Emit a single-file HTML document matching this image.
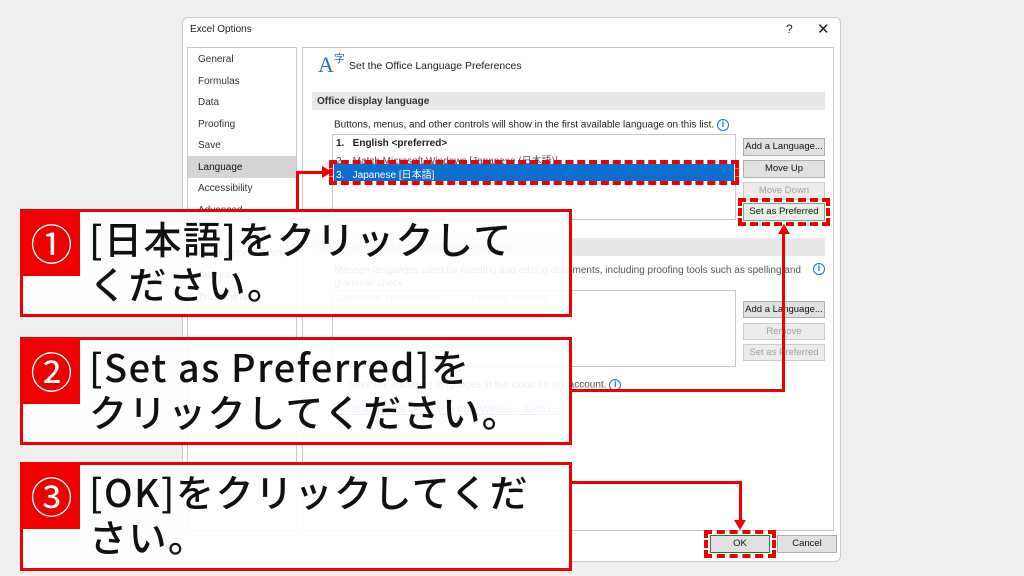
<!DOCTYPE html>
<html><head><meta charset="utf-8"><style>
*{margin:0;padding:0;box-sizing:border-box}
body{width:1024px;height:576px;background:#efefef;position:relative;overflow:hidden;font-family:"Liberation Sans","Noto Sans CJK JP",sans-serif;font-size:10px;color:#222}
.a{position:absolute;white-space:nowrap}
.dlg{left:182px;top:17px;width:659px;height:545px;background:#fff;border:1px solid #ccc;border-radius:6px}
.nav{left:187px;top:47px;width:110px;height:484px;border:1px solid #c8c8c8;background:#fff}
.nav div{position:absolute;left:10px;font-size:10px;color:#333;white-space:nowrap}
.main{left:302px;top:47px;width:532px;height:484px;border:1px solid #c8c8c8;background:#fff}
.sec{background:#e8e8e8;font-weight:bold;font-size:10px;padding:4px 5px;color:#333}
.btn{position:absolute;background:#e1e1e1;border:1px solid #adadad;font-size:9.5px;text-align:center;line-height:16px;color:#111;white-space:nowrap;overflow:hidden}
.dis{color:#a0a0a0;background:#ececec;border-color:#ccc}
.box{border:3px solid #e00;background:rgba(255,255,255,.9)}
.badge{position:absolute;left:0;top:0;width:57px;height:64px;background:#e00;color:#fff;font-size:42px;text-align:center;line-height:62px;font-family:"Noto Sans CJK JP",sans-serif}
.txt{position:absolute;left:66px;top:3px;font-size:38px;line-height:45px;color:#111;font-family:"Noto Sans CJK JP",sans-serif;font-weight:500;white-space:nowrap;letter-spacing:1.5px}
.dash{border:4px dashed #e00}
.ln{position:absolute;background:#e00}
.info{display:inline-block;width:12px;height:12px;border:1.5px solid #1a73c8;border-radius:50%;color:#1a73c8;font-size:9px;line-height:9px;text-align:center;font-weight:bold;vertical-align:middle}
</style></head><body>
<div class="a dlg"></div>
<div class="a" style="left:190px;top:24px;font-size:10px">Excel Options</div>
<div class="a" style="left:786px;top:22px;font-size:12px">?</div>
<div class="a" style="left:817px;top:20px;font-size:15px">✕</div>
<div class="a nav">
<div style="top:6px">General</div><div style="top:28px">Formulas</div><div style="top:49px">Data</div><div style="top:71px">Proofing</div><div style="top:92px">Save</div>
<div style="top:108px;left:0;width:108px;height:22px;background:#d5d5d5"></div>
<div style="top:114px;color:#111">Language</div><div style="top:135px">Accessibility</div><div style="top:157px">Advanced</div><div style="top:200px">Quick Access Toolbar</div><div style="top:222px">Add-ins</div><div style="top:244px">Trust Center</div>
</div>
<div class="a main"></div>
<div class="a" style="left:318px;top:52px;color:#2e6db4;font-size:22px;font-family:'Liberation Serif',serif">A<span style="font-size:11px;position:relative;top:-10px;font-family:'Noto Sans CJK JP'">字</span></div>
<div class="a" style="left:349px;top:60px;font-size:10.5px">Set the Office Language Preferences</div>
<div class="a sec" style="left:312px;top:92px;width:513px;height:18px">Office display language</div>
<div class="a" style="left:334px;top:119px">Buttons, menus, and other controls will show in the first available language on this list. <span class="info">i</span></div>
<div class="a" style="left:332px;top:134px;width:404px;height:86px;border:1px solid #c8c8c8"></div>
<div class="a" style="left:336px;top:138px;font-weight:bold">1.&nbsp;&nbsp;&nbsp;English &lt;preferred&gt;</div>
<div class="a" style="left:336px;top:152px;color:#555">2.&nbsp;&nbsp;&nbsp;Match Microsoft Windows [Japanese (日本語)]</div>
<div class="a" style="left:334px;top:164px;width:400px;height:17px;background:#0a6fd0;color:#fff;padding:2px 2px">3.&nbsp;&nbsp;&nbsp;Japanese [日本語]</div>
<div class="a dash" style="left:329px;top:160px;width:410px;height:25px"></div>
<div class="btn" style="left:743px;top:138px;width:82px;height:18px">Add a Language...</div>
<div class="btn" style="left:743px;top:160px;width:82px;height:18px">Move Up</div>
<div class="btn dis" style="left:743px;top:182px;width:82px;height:18px">Move Down</div>
<div class="btn" style="left:743px;top:203px;width:82px;height:18px;background:#e5efe5;border-color:#7a9">Set as Preferred</div>
<div class="a dash" style="left:738px;top:198px;width:92px;height:28px"></div>
<div class="a sec" style="left:312px;top:238px;width:513px;height:18px;color:#bbb">Office authoring languages and proofing</div>
<div class="a" style="left:334px;top:264px;width:475px;line-height:13px;color:#555;white-space:normal">Manage languages used for creating and editing documents, including proofing tools such as spelling and grammar check.</div>
<div class="a" style="left:813px;top:263px"><span class="info">i</span></div>
<div class="a" style="left:332px;top:290px;width:404px;height:77px;border:1px solid #c8c8c8"></div>
<div class="a" style="left:336px;top:293px;font-weight:bold;color:#bbb">Japanese &lt;preferred&gt;</div><div class="a" style="left:471px;top:293px;color:#bbb">Proofing installed</div>
<div class="btn" style="left:743px;top:301px;width:82px;height:17px">Add a Language...</div>
<div class="btn dis" style="left:743px;top:323px;width:82px;height:17px">Remove</div>
<div class="btn dis" style="left:743px;top:344px;width:82px;height:17px">Set as Preferred</div>
<div class="a" style="left:348px;top:379px;color:#555">Store my authoring languages in the cloud for my account. <span class="info">i</span></div>
<div class="a" style="left:334px;top:405px;color:#3a6fc0;text-decoration:underline">Install additional keyboards from Windows Settings</div>
<div class="btn" style="left:710px;top:535px;width:60px;height:18px;border-color:#2a7a3a">OK</div>
<div class="btn" style="left:777px;top:535px;width:60px;height:18px">Cancel</div>
<div class="a dash" style="left:704px;top:530px;width:72px;height:28px"></div>
<div class="ln" style="left:296px;top:172px;width:3px;height:38px"></div>
<div class="ln" style="left:296px;top:171px;width:30px;height:3px"></div>
<div class="a" style="left:322px;top:166px;width:0;height:0;border-left:10px solid #e00;border-top:6px solid transparent;border-bottom:6px solid transparent"></div>
<div class="ln" style="left:571px;top:389px;width:213px;height:3px"></div>
<div class="ln" style="left:782px;top:232px;width:3px;height:160px"></div>
<div class="a" style="left:778px;top:224px;width:0;height:0;border-bottom:10px solid #e00;border-left:6px solid transparent;border-right:6px solid transparent"></div>
<div class="ln" style="left:571px;top:481px;width:171px;height:3px"></div>
<div class="ln" style="left:739px;top:481px;width:3px;height:42px"></div>
<div class="a" style="left:734px;top:520px;width:0;height:0;border-top:10px solid #e00;border-left:6px solid transparent;border-right:6px solid transparent"></div>
<div class="a box" style="left:20px;top:209px;width:552px;height:108px"><div class="badge">①</div><div class="txt">[日本語]をクリックして<br>ください。</div></div>
<div class="a box" style="left:20px;top:337px;width:552px;height:108px"><div class="badge">②</div><div class="txt">[Set as Preferred]を<br>クリックしてください。</div></div>
<div class="a box" style="left:20px;top:462px;width:552px;height:109px"><div class="badge">③</div><div class="txt">[OK]をクリックしてくだ<br>さい。</div></div>
</body></html>
